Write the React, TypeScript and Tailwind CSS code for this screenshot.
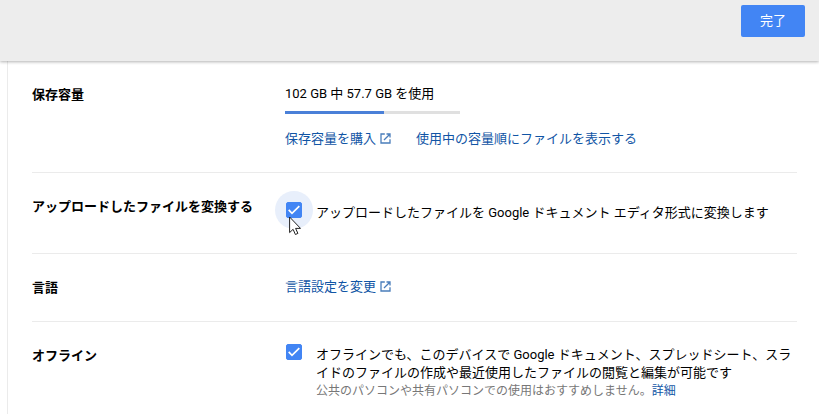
import { useState } from 'react';
import type { ReactNode } from 'react';

interface RowProps {
  label: string;
  children: ReactNode;
  last?: boolean;
}

interface CheckboxProps {
  id: string;
  checked: boolean;
  onChange: (checked: boolean) => void;
}

const SettingRow: React.FC<RowProps> = ({ label, children, last }) => (
  <section className={`grid grid-cols-[253px_1fr] pt-[22px] pb-6 ${last ? '' : 'border-b border-[#ebebeb]'}`}>
    <h2 className="pt-[3px] font-bold">{label}</h2>
    <div className="min-w-0">{children}</div>
  </section>
);

const Checkbox: React.FC<CheckboxProps> = ({ id, checked, onChange }) => (
  <span className="relative block size-4 shrink-0">
    <input
      id={id}
      type="checkbox"
      checked={checked}
      onChange={(e) => onChange(e.target.checked)}
      className="block size-4 appearance-none rounded-xs border border-gray-500 checked:border-[#4285f4] checked:bg-[#4285f4]"
    />
    {checked && (
      <svg className="pointer-events-none absolute inset-0 size-4" viewBox="0 0 16 16" fill="none" stroke="#fff" strokeWidth="1.7">
        <path d="M2.7 7.9l3.3 3.4 7.3-7.2" />
      </svg>
    )}
  </span>
);

const OpenInNew: React.FC = () => (
  <svg className="mb-0.5 size-[11px]" viewBox="0 0 11 11" fill="none" stroke="#4a7dbb" strokeWidth="1.3" aria-hidden="true">
    <path d="M4.8 1H1v9h9V6.2" />
    <path d="M6.5 1H10v3.5M9.8 1.2L4 7" />
  </svg>
);

const Cursor: React.FC = () => (
  <svg
    className="pointer-events-none absolute top-3.5 left-[3px] h-[19px] w-3"
    viewBox="0 0 12 19"
    fill="#fff"
    stroke="#222"
    strokeWidth="1"
    aria-hidden="true"
  >
    <path d="M.6 1v15.6l3.5-3.3 2.3 5.2 2.5-1.1-2.3-5h4.9z" />
  </svg>
);

const App: React.FC = () => {
  const [convert, setConvert] = useState(true);
  const [offline, setOffline] = useState(true);

  const storage = { total: 102, used: 57.7 };

  return (
    <div className="bg-white font-['Roboto','Noto_Sans_CJK_JP',sans-serif] text-[13px] leading-[18px] text-black" lang="ja">
      {/* Header */}
      <header className="relative flex justify-end bg-[#ededed] px-3.5 pt-[5px] pb-6 shadow-[0_1px_3px_rgba(0,0,0,0.3)]">
        <button type="button" className="h-8 w-16 rounded-xs bg-[#4285f4] text-white">
          完了
        </button>
      </header>

      {/* Settings */}
      <main className="ml-[7px] border-l border-[#ebebeb] pr-[22px] pl-6">
        <SettingRow label="保存容量">
          <p className="pt-0.5">
            {storage.total} GB 中 {storage.used} GB を使用
          </p>
          <div className="mt-2 h-[3px] w-[175px] bg-[#e0e0e0]">
            <div className="h-full bg-[#4a80d8]" style={{ width: `${(storage.used / storage.total) * 100}%` }} />
          </div>
          <div className="mt-4 flex gap-[25px] text-[#1155a5]">
            <a href="#buy" className="flex items-center gap-1">
              保存容量を購入
              <OpenInNew />
            </a>
            <a href="#quota">使用中の容量順にファイルを表示する</a>
          </div>
        </SettingRow>

        <SettingRow label="アップロードしたファイルを変換する">
          <div className="flex gap-3.5 py-[7px] pl-px">
            <div className="relative h-4">
              <span className="absolute -inset-[11px] rounded-full bg-[#e8effb]" />
              <Checkbox id="convert" checked={convert} onChange={setConvert} />
              <Cursor />
            </div>
            <label htmlFor="convert" className="pt-0.5">
              アップロードしたファイルを Google ドキュメント エディタ形式に変換します
            </label>
          </div>
        </SettingRow>

        <SettingRow label="言語">
          <a href="#language" className="flex w-fit items-center gap-1 pt-0.5 pb-px text-[#1155a5]">
            言語設定を変更
            <OpenInNew />
          </a>
        </SettingRow>

        <SettingRow label="オフライン" last>
          <div className="flex gap-3.5 pl-px">
            <Checkbox id="offline" checked={offline} onChange={setOffline} />
            <div className="pt-0.5">
              <label htmlFor="offline" className="block">
                オフラインでも、このデバイスで Google ドキュメント、スプレッドシート、スライドのファイルの作成や最近使用したファイルの閲覧と編集が可能です
              </label>
              <p className="text-xs leading-[18px] text-[#777]">
                公共のパソコンや共有パソコンでの使用はおすすめしません。
                <a href="#details" className="text-[#1155a5]">
                  詳細
                </a>
              </p>
            </div>
          </div>
        </SettingRow>
      </main>
    </div>
  );
};

export default App;
